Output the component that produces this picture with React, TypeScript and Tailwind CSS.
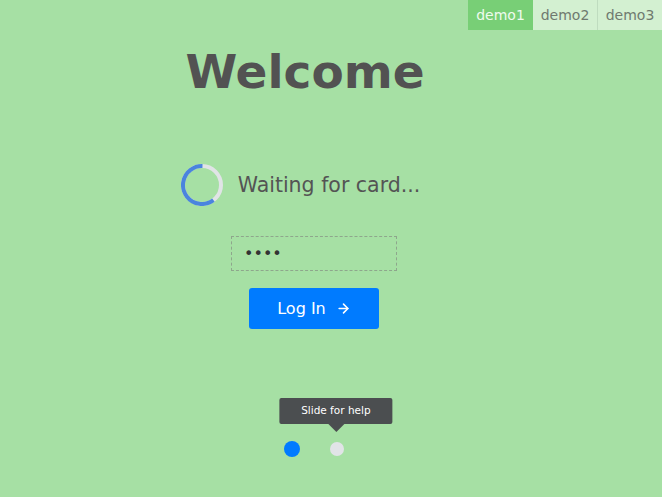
import { ArrowRight } from "lucide-react";

const font = "font-['DejaVu_Sans',sans-serif]";

function Tabs() {
  const tabs = ["demo1", "demo2", "demo3"];
  return (
    <div className="flex justify-end h-[30px]">
      {tabs.map((t, i) => (
        <div
          key={t}
          className={
            i === 0
              ? "w-[65px] flex items-center justify-center text-[14px] bg-[#78cf76] text-[#eefbee]"
              : i === 1
                ? "w-[65px] flex items-center justify-center text-[14px] bg-[#d3f0d1] text-[#6f7a6f] border-r border-[#bfdcbf]"
                : "w-[64px] flex items-center justify-center text-[14px] bg-[#d3f0d1] text-[#6f7a6f]"
          }
        >
          {t}
        </div>
      ))}
    </div>
  );
}

function Spinner() {
  return (
    <svg width="42" height="42" viewBox="0 0 42 42">
      <circle cx="21" cy="21" r="19" fill="none" stroke="#e0e4e6" strokeWidth="4" />
      <circle
        cx="21"
        cy="21"
        r="19"
        fill="none"
        stroke="#4a84de"
        strokeWidth="4"
        strokeDasharray="72 200"
        transform="rotate(53 21 21)"
      />
    </svg>
  );
}

export default function App() {
  return (
    <div className={`min-h-screen w-full bg-[#a6e0a4] ${font}`}>
      <Tabs />
      <div className="w-[628px] flex flex-col items-center">
        <h1 className="mt-[18px] mr-[18px] text-[47px] leading-none font-bold text-[#525252]">Welcome</h1>

        <div className="mt-[69px] mr-[27px] flex items-center gap-[15px]">
          <Spinner />
          <span className="text-[20.5px] leading-none text-[#545454]">Waiting for card...</span>
        </div>

        <input
          type="password"
          defaultValue="1234"
          className="mt-[30px] w-[166px] h-[35px] px-[12px] border border-dashed border-[#8ea68c] bg-transparent text-[16px] text-[#333] outline-none"
        />

        <button className="mt-[17px] w-[130px] h-[41px] rounded-[3px] bg-[#007bff] text-white text-[16px] flex items-center justify-center gap-[10px]">
          Log In
          <ArrowRight size={15} strokeWidth={2.5} />
        </button>

        <div className="mt-[112px] h-[16px] flex items-center gap-[30px]">
          <div className="w-[16px] h-[16px] rounded-full bg-[#007bff]" />
          <div className="relative w-[14px] h-[14px] rounded-full bg-[#e1e4e7]">
            <div className="absolute bottom-full mb-[10px] left-1/2 -translate-x-[51%] flex flex-col items-center">
              <div className="w-[113px] h-[26px] rounded-[2px] bg-[#4b4e50] text-white text-[10.5px] flex items-center justify-center whitespace-nowrap">
                Slide for help
              </div>
              <div className="w-0 h-0 border-l-[8px] border-r-[8px] border-t-[8px] border-l-transparent border-r-transparent border-t-[#4b4e50]" />
            </div>
          </div>
        </div>
      </div>
    </div>
  );
}
